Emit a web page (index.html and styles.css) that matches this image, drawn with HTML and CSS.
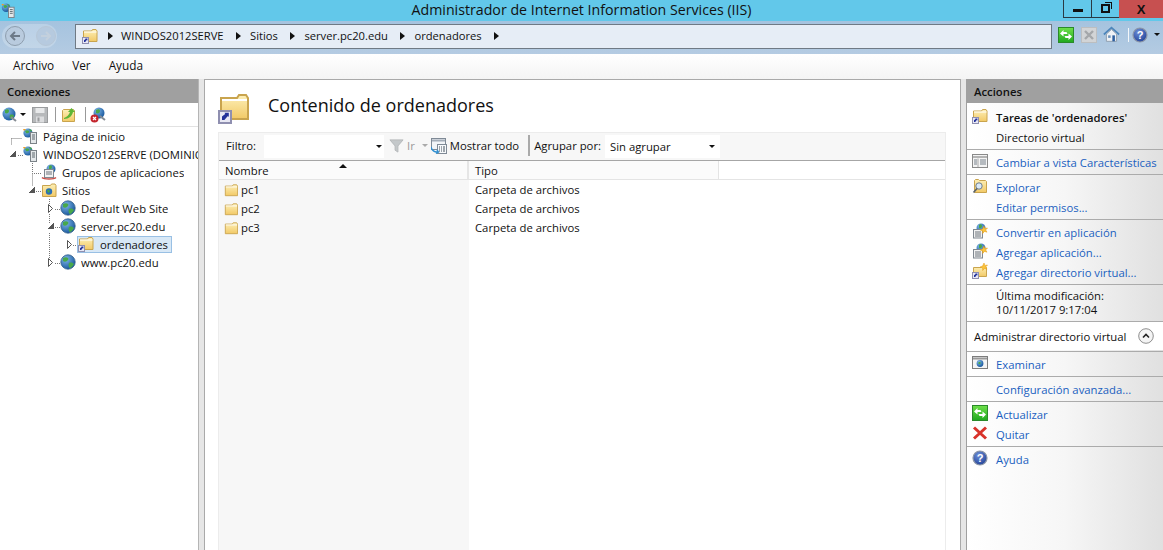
FILE: index.html
```html
<!DOCTYPE html>
<html lang="es">
  <head>
    <meta charset="UTF-8" />
    <title>Administrador de Internet Information Services (IIS)</title>
    <link rel="stylesheet" href="styles.css">
  </head>

  <body>
    <!-- shared icons -->
    <svg class="icon-defs" aria-hidden="true">
      <defs>
        <linearGradient id="gFolder" x1="0" y1="0" x2="0" y2="1">
          <stop offset="0" stop-color="#fdf0b8" />
          <stop offset="1" stop-color="#f2c966" />
        </linearGradient>
        <radialGradient id="gGlobe" cx="0.35" cy="0.3" r="0.8">
          <stop offset="0" stop-color="#7fb6e8" />
          <stop offset="1" stop-color="#0f4f96" />
        </radialGradient>
        <linearGradient id="gGreen" x1="0" y1="0" x2="0" y2="1">
          <stop offset="0" stop-color="#6fe04a" />
          <stop offset="1" stop-color="#1fa81f" />
        </linearGradient>
        <radialGradient id="gHelp" cx="0.4" cy="0.3" r="0.8">
          <stop offset="0" stop-color="#6d8fd8" />
          <stop offset="1" stop-color="#1c3c92" />
        </radialGradient>

        <symbol id="i-folder" viewBox="0 0 16 16">
          <path d="M1.500 14.500V3.500h8l1-1.500h4l1 1.500v11z" fill="url(#gFolder)" stroke="#c9a44e" />
          <path d="M2 4.500h13" stroke="#fff" />
        </symbol>
        <symbol id="i-folder-link" viewBox="0 0 16 16">
          <path d="M1.500 13.500V3h8l1-1.500h3.500l1 1.500v10.500z" fill="url(#gFolder)" stroke="#c9a44e" />
          <path d="M2 4h12.500" stroke="#fff" />
          <use href="#i-arrow" />
        </symbol>
        <symbol id="i-arrow" viewBox="0 0 16 16">
          <rect x="0.500" y="9.500" width="6" height="6" fill="#e8e8f4" stroke="#8f8fb0" />
          <path d="M2 14V12.200L3.600 11l-.3-.6H5.400v2l-.6-.3L3.200 14z" fill="#22319a" />
        </symbol>
        <symbol id="i-globe" viewBox="0 0 16 16">
          <circle cx="8" cy="8" r="7.200" fill="url(#gGlobe)" stroke="#345f8c" stroke-width="0.800" />
          <path d="M3 4c2-1 4-1 5 0s0 2-1 3-3 1-4 0zM9 9c2-1 4 0 5 1-1 2-3 4-4 4s-2-3-1-5z" fill="#48a84a" />
        </symbol>
        <symbol id="i-server" viewBox="0 0 16 16">
          <circle cx="6" cy="5" r="4.600" fill="url(#gGlobe)" />
          <path d="M3 3c1-1 3-1 4 0s-1 3-3 2zM7 1l3 1-1 2z" fill="#48a84a" />
          <path d="M1 1h3L2 3z" fill="#f2a023" />
          <rect x="8.500" y="4.500" width="6" height="11" fill="#e4e8ea" stroke="#7b8288" />
          <path d="M10 7h3M10 9h3M10 11h3" stroke="#5d666d" />
        </symbol>
        <symbol id="i-pool" viewBox="0 0 16 16">
          <circle cx="10" cy="5" r="4.500" fill="url(#gGlobe)" />
          <path d="M8 2c1-1 3-1 3 1s-2 3-3 2z" fill="#48a84a" />
          <rect x="3.500" y="5.500" width="9" height="8" fill="#f2f2f2" stroke="#808890" />
          <path d="M5 8h6M5 10h6" stroke="#6c747c" />
          <path d="M1 13.500c2 2 12 2 14 0" fill="none" stroke="#c8504a" stroke-width="1.400" />
        </symbol>
        <symbol id="i-sites" viewBox="0 0 16 16">
          <path d="M1.500 14.500V3.500h8l1-1.500h3.500l1 1.500v11z" fill="url(#gFolder)" stroke="#c9a44e" />
          <circle cx="8" cy="9.500" r="3.200" fill="#2a6fb5" />
          <path d="M6 8.500l2-1 1 2-2 1.500z" fill="#48a84a" />
        </symbol>
        <symbol id="i-views" viewBox="0 0 16 16">
          <rect x="0.500" y="1.500" width="15" height="13" fill="#f4f4f4" stroke="#8a8a8a" />
          <path d="M1 4h14" stroke="#b4b4b4" stroke-width="2" />
          <path d="M6 5.500v8.500" stroke="#a8a8a8" />
          <path d="M2 7h3M2 9h3M2 11h3M8 7h6M8 9h6M8 11h6" stroke="#77808a" />
        </symbol>
        <symbol id="i-explore" viewBox="0 0 16 16">
          <path d="M2.500 14.500V2.500l1-1h3l1 1h6l1 1v11z" fill="url(#gFolder)" stroke="#c9a44e" />
          <circle cx="7" cy="8" r="3.200" fill="#dbeaf6" stroke="#6d7d8c" />
          <path d="M5 10.500L1.500 14.500" stroke="#59626b" stroke-width="1.600" />
        </symbol>
        <symbol id="i-app" viewBox="0 0 16 16">
          <circle cx="9" cy="5" r="4.500" fill="url(#gGlobe)" />
          <path d="M7 2c1-1 3-1 3 1s-2 3-3 2z" fill="#48a84a" />
          <rect x="1.500" y="6.500" width="9" height="8.500" fill="#f2f2f2" stroke="#808890" />
          <path d="M3 9h6M3 11h6M3 13h6" stroke="#6c747c" />
          <use href="#i-star" />
        </symbol>
        <symbol id="i-star" viewBox="0 0 16 16">
          <path d="M12 3l.9 2.400 2.600-.4-1.800 1.900 1.300 2.300-2.500-.8L10.700 10.500l-.1-2.600-2.400-1 2.400-.9z" fill="#f9c23c" stroke="#e69a12" stroke-width="0.500" />
        </symbol>
        <symbol id="i-vdir" viewBox="0 0 16 16">
          <path d="M1.500 13.500V4.500h8l1-1h3l1 1v9z" fill="url(#gFolder)" stroke="#c9a44e" />
          <use href="#i-arrow" />
          <path d="M12 0l.9 2.400 2.600-.4-1.800 1.900 1.300 2.300-2.500-.8-1.800 2.100-.1-2.600-2.400-1 2.400-.9z" fill="#f9c23c" stroke="#e69a12" stroke-width="0.500" />
        </symbol>
        <symbol id="i-browse" viewBox="0 0 16 16">
          <rect x="0.500" y="1.500" width="15" height="12" fill="#f4f4f4" stroke="#7d7d7d" />
          <path d="M1 3.500h14" stroke="#9a9a9a" stroke-width="2" />
          <circle cx="8" cy="8.500" r="3.400" fill="url(#gGlobe)" />
          <path d="M6.500 7l2 0 0 2-2 0z" fill="#48a84a" />
        </symbol>
        <symbol id="i-refresh" viewBox="0 0 16 16">
          <rect x="0.500" y="0.500" width="15" height="15" fill="url(#gGreen)" stroke="#2a8a2a" />
          <path d="M2 6.500L5.500 3v2h3l1 2h-4v2.500zM14 9.500L10.500 13v-2h-3l-1-2h4V6.500z" fill="#fff" />
        </symbol>
        <symbol id="i-stop" viewBox="0 0 16 16">
          <rect x="0.500" y="0.500" width="15" height="15" fill="#d2d4d6" stroke="#bcbec0" />
          <path d="M4 4l8 8M12 4l-8 8" stroke="#a4a7aa" stroke-width="2.400" />
        </symbol>
        <symbol id="i-remove" viewBox="0 0 16 16">
          <path d="M2 2.500l12 11M14 2.500l-12 11" stroke="#d8322a" stroke-width="3" />
        </symbol>
        <symbol id="i-help" viewBox="0 0 16 16">
          <circle cx="8" cy="8" r="7" fill="url(#gHelp)" stroke="#8d97a8" stroke-width="1.200" />
          <text x="8" y="12" text-anchor="middle" class="help-mark">?</text>
        </symbol>
        <symbol id="i-home" viewBox="0 0 20 20">
          <path d="M1 10L10 2l9 8" fill="none" stroke="#4d86bb" stroke-width="2" />
          <path d="M4 9.500L10 4l6 5.500V18H4z" fill="#eef2f6" stroke="#8796a6" />
          <rect x="11" y="11" width="3" height="7" fill="#2d5f9f" />
          <rect x="6" y="11" width="3" height="3" fill="#6d93bb" />
        </symbol>
        <symbol id="i-connect" viewBox="0 0 16 16">
          <circle cx="7" cy="7" r="6.500" fill="url(#gGlobe)" />
          <path d="M3 3c2-1 4-1 4 1s-2 3-4 2zM8 8c2-1 4 0 4 1s-2 3-3 3-2-2-1-4z" fill="#48a84a" />
          <path d="M9 10l5 4" stroke="#868d94" stroke-width="2" />
        </symbol>
        <symbol id="i-save" viewBox="0 0 16 16">
          <rect x="0.500" y="0.500" width="15" height="15" fill="#b7b9bb" stroke="#9a9c9e" />
          <rect x="3.500" y="1" width="9" height="5" fill="#e8e9ea" />
          <rect x="4" y="9.500" width="8" height="6" fill="#dcdddf" />
          <rect x="5.500" y="10.500" width="2" height="4" fill="#9a9c9e" />
        </symbol>
        <symbol id="i-up" viewBox="0 0 16 16">
          <path d="M1.500 14.500V3.500l1-1h10l1 1v11z" fill="url(#gFolder)" stroke="#c9a44e" />
          <path d="M3 11c3-1 5-3 6-6H7l3.500-4L14 5h-2c-1 4-4 7-9 7z" fill="#5eb636" />
        </symbol>
        <symbol id="i-disconnect" viewBox="0 0 16 16">
          <circle cx="9" cy="6" r="5.500" fill="url(#gGlobe)" />
          <path d="M6 3c2-1 4-1 4 1s-2 3-4 2z" fill="#48a84a" />
          <path d="M10 9l5 4" stroke="#868d94" stroke-width="2" />
          <circle cx="4.500" cy="11.500" r="4" fill="#c4262e" />
          <path d="M3 10l3 3M6 10l-3 3" stroke="#fff" stroke-width="1.200" />
        </symbol>
        <symbol id="i-filter" viewBox="0 0 16 16">
          <path d="M1 2h14L9.500 8.500V15l-3-2V8.500z" fill="#c4c8ca" stroke="#b4b8ba" />
        </symbol>
        <symbol id="i-showall" viewBox="0 0 16 16">
          <rect x="0.500" y="0.500" width="14" height="11" fill="#f1f4f7" stroke="#7f8a96" />
          <path d="M1 2.500h13" stroke="#a3adb8" stroke-width="2" />
          <rect x="6.500" y="6.500" width="9" height="9" fill="#f7f9fb" stroke="#7f8a96" />
          <path d="M8 9h1M10 9h1M12 9h2M8 11h1M10 11h1M12 11h2M8 13h1M10 13h1M12 13h2" stroke="#43505c" />
          <path d="M0 9c1 4 3 5 6 5M6 12l1.500 2L5 15.500" fill="none" stroke="#2f8fd1" stroke-width="1.400" />
        </symbol>
        <symbol id="i-closed" viewBox="0 0 13 9">
          <path d="M1.500 0.500v8l4-4z" fill="#fff" stroke="#555" />
        </symbol>
      </defs>
    </svg>

    <header class="titlebar">
      <svg class="app-icon"><use href="#i-server" /></svg>
      <span class="titlebar-text">Administrador de Internet Information Services (IIS)</span>
      <div class="winbtns">
        <div class="winbtn"><span class="glyph-min"></span></div>
        <div class="winbtn"><span class="glyph-max"></span></div>
        <div class="winbtn winbtn-close">X</div>
      </div>
    </header>

    <nav class="navbar">
      <div class="nav-orb">
        <span class="nav-btn"><svg viewBox="0 0 14 14"><path d="M12 7H3M7 3L3 7l4 4" fill="none" stroke="#6d7a88" stroke-width="2" /></svg></span>
        <span class="nav-btn nav-btn-off"><svg viewBox="0 0 14 14"><path d="M2 7h9M7 3l4 4-4 4" fill="none" stroke="#c3d0dd" stroke-width="2" /></svg></span>
      </div>
      <div class="address">
        <svg class="ic16"><use href="#i-folder-link" /></svg>
        <span class="crumb-sep first"></span><span>WINDOS2012SERVE</span>
        <span class="crumb-sep"></span><span>Sitios</span>
        <span class="crumb-sep"></span><span>server.pc20.edu</span>
        <span class="crumb-sep"></span><span>ordenadores</span>
        <span class="crumb-sep"></span>
      </div>
      <div class="nav-tools">
        <svg class="ic16"><use href="#i-refresh" /></svg>
        <svg class="ic16"><use href="#i-stop" /></svg>
        <svg class="ic-home"><use href="#i-home" /></svg>
        <span class="nav-tools-sep"></span>
        <svg class="ic16"><use href="#i-help" /></svg>
        <span class="drop-arrow"></span>
      </div>
    </nav>

    <div class="menubar">
      <span>Archivo</span>
      <span>Ver</span>
      <span>Ayuda</span>
    </div>

    <main class="workspace">
      <section class="pane-left">
        <h2 class="pane-head">Conexiones</h2>
        <div class="conn-tools">
          <svg class="ic16"><use href="#i-connect" /></svg>
          <span class="drop-arrow small"></span>
          <svg class="ic16 tool-save"><use href="#i-save" /></svg>
          <span class="tool-sep"></span>
          <svg class="ic16"><use href="#i-up" /></svg>
          <span class="tool-sep"></span>
          <svg class="ic16"><use href="#i-disconnect" /></svg>
        </div>
        <div class="tree">
          <svg class="tree-lines" width="100" height="150">
            <path d="M11.500 11.500H22M11.500 11.500V18M18 28.500H23M32.500 36V46.500H41M32.500 46.500V59M36 64.500H41M49.500 72V78M55 82.500H60M49.500 87V96M55 100.500H60M49.500 106V131M55 136.500H60M73 118.500H77" fill="none" stroke="#777" stroke-dasharray="1 1" />
          </svg>
          <div class="tree-row lvl0"><span class="twist"></span><svg class="ic16"><use href="#i-server" /></svg><span class="tree-label">Página de inicio</span></div>
          <div class="tree-row lvl0"><span class="twist open"></span><svg class="ic16"><use href="#i-server" /></svg><span class="tree-label">WINDOS2012SERVE (DOMINIO</span></div>
          <div class="tree-row lvl1"><span class="twist"></span><svg class="ic16"><use href="#i-pool" /></svg><span class="tree-label">Grupos de aplicaciones</span></div>
          <div class="tree-row lvl1"><span class="twist open"></span><svg class="ic16"><use href="#i-sites" /></svg><span class="tree-label">Sitios</span></div>
          <div class="tree-row lvl2"><svg class="twist"><use href="#i-closed" /></svg><svg class="ic16"><use href="#i-globe" /></svg><span class="tree-label">Default Web Site</span></div>
          <div class="tree-row lvl2"><span class="twist open"></span><svg class="ic16"><use href="#i-globe" /></svg><span class="tree-label">server.pc20.edu</span></div>
          <div class="tree-row lvl3"><svg class="twist"><use href="#i-closed" /></svg><div class="tree-sel"><svg class="ic16"><use href="#i-folder-link" /></svg><span class="tree-label">ordenadores</span></div></div>
          <div class="tree-row lvl2"><svg class="twist"><use href="#i-closed" /></svg><svg class="ic16"><use href="#i-globe" /></svg><span class="tree-label">www.pc20.edu</span></div>
        </div>
      </section>

      <section class="pane-center">
        <div class="page-head">
          <svg class="ic-page"><use href="#i-folder-link" /></svg>
          <h1>Contenido de ordenadores</h1>
        </div>
        <div class="content-box">
          <div class="filter-bar">
            <span class="filter-label">Filtro:</span>
            <div class="combo combo-filter"><span class="drop-arrow small"></span></div>
            <svg class="ic-filter"><use href="#i-filter" /></svg>
            <span class="filter-go">Ir</span>
            <span class="drop-arrow small light"></span>
            <svg class="ic16"><use href="#i-showall" /></svg>
            <span class="filter-all">Mostrar todo</span>
            <span class="filter-sep"></span>
            <span class="filter-group">Agrupar por:</span>
            <div class="combo combo-group"><span>Sin agrupar</span><span class="drop-arrow small"></span></div>
          </div>
          <div class="list-head">
            <div class="col-name">Nombre<span class="sort-arrow"></span></div>
            <div class="col-type">Tipo</div>
          </div>
          <div class="list-body">
            <div class="list-row"><div class="col-name"><svg class="ic-row"><use href="#i-folder" /></svg>pc1</div><div class="col-type">Carpeta de archivos</div></div>
            <div class="list-row"><div class="col-name"><svg class="ic-row"><use href="#i-folder" /></svg>pc2</div><div class="col-type">Carpeta de archivos</div></div>
            <div class="list-row"><div class="col-name"><svg class="ic-row"><use href="#i-folder" /></svg>pc3</div><div class="col-type">Carpeta de archivos</div></div>
          </div>
        </div>
      </section>

      <aside class="pane-right">
        <h2 class="pane-head">Acciones</h2>
        <div class="act-group first">
          <div class="act-row act-title"><svg class="ic16"><use href="#i-folder-link" /></svg>Tareas de 'ordenadores'</div>
          <div class="act-row act-plain">Directorio virtual</div>
        </div>
        <div class="act-group">
          <div class="act-row"><svg class="ic16"><use href="#i-views" /></svg><a>Cambiar a vista Características</a></div>
        </div>
        <div class="act-group">
          <div class="act-row"><svg class="ic16"><use href="#i-explore" /></svg><a>Explorar</a></div>
          <div class="act-row"><a>Editar permisos...</a></div>
        </div>
        <div class="act-group">
          <div class="act-row"><svg class="ic16"><use href="#i-app" /></svg><a>Convertir en aplicación</a></div>
          <div class="act-row"><svg class="ic16"><use href="#i-app" /></svg><a>Agregar aplicación...</a></div>
          <div class="act-row"><svg class="ic16"><use href="#i-vdir" /></svg><a>Agregar directorio virtual...</a></div>
        </div>
        <div class="act-group act-info">
          <div>Última modificación:</div>
          <div>10/11/2017 9:17:04</div>
        </div>
        <div class="act-band">
          <span>Administrar directorio virtual</span>
          <span class="collapse-btn"><svg viewBox="0 0 16 16"><circle cx="8" cy="8" r="7.300" fill="#f4f4f4" stroke="#8e8e8e" /><path d="M5 9.500L8 6.500l3 3" fill="none" stroke="#222" stroke-width="1.600" /></svg></span>
        </div>
        <div class="act-group">
          <div class="act-row"><svg class="ic16"><use href="#i-browse" /></svg><a>Examinar</a></div>
        </div>
        <div class="act-group">
          <div class="act-row"><a>Configuración avanzada...</a></div>
        </div>
        <div class="act-group">
          <div class="act-row"><svg class="ic16"><use href="#i-refresh" /></svg><a>Actualizar</a></div>
          <div class="act-row"><svg class="ic16"><use href="#i-remove" /></svg><a>Quitar</a></div>
        </div>
        <div class="act-group last">
          <div class="act-row"><svg class="ic16"><use href="#i-help" /></svg><a>Ayuda</a></div>
        </div>
      </aside>
    </main>
  </body>
</html>
```

FILE: styles.css
```css
* {
  box-sizing: border-box;
}

html,
body {
  height: 100%;
}

body {
  margin: 0;
  width: 1163px;
  height: 550px;
  overflow: hidden;
  display: flex;
  flex-direction: column;
  background: #fff;
  color: #111;
  font-family: "Open Sans", "Noto Sans", sans-serif;
  font-size: 11.3px;
}

h1,
h2 {
  margin: 0;
  font-weight: normal;
}

svg {
  flex: none;
  display: block;
}

.icon-defs {
  position: absolute;
  width: 0;
  height: 0;
}

.help-mark {
  font-family: "Liberation Sans", sans-serif;
  font-size: 11px;
  font-weight: bold;
  fill: #fff;
}

.ic16 {
  width: 16px;
  height: 16px;
}

/* title bar */

.titlebar {
  flex: none;
  height: 21px;
  display: flex;
  align-items: flex-start;
  background: #62c8ea;
}

.app-icon {
  width: 16px;
  height: 15px;
  margin-top: 3px;
  flex: none;
}

.titlebar-text {
  flex: 1;
  margin-left: 64px;
  margin-right: -20px;
  text-align: center;
  font-size: 14.2px;
  line-height: 19px;
  color: #111;
}

.winbtns {
  display: flex;
  height: 18px;
}

.winbtn {
  width: 28px;
  height: 18px;
  display: flex;
  align-items: center;
  justify-content: center;
  border: 1px solid #2a3a44;
  border-top: 0;
  border-right: 0;
}

.winbtn-close {
  width: 44px;
  border: 0;
  background: #c75050;
  font-family: "Liberation Sans", sans-serif;
  font-size: 13px;
  font-weight: bold;
  color: #111;
}

.glyph-min {
  width: 10px;
  height: 3px;
  margin-top: 3px;
  background: #111;
}

.glyph-max {
  width: 9px;
  height: 9px;
  border: 2px solid #111;
  box-shadow: 2px -2px 0 -1px #62c8ea, 3px -3px 0 -1px #111;
}

/* address bar */

.navbar {
  flex: none;
  height: 33px;
  display: flex;
  align-items: flex-start;
  background: linear-gradient(#a5c3df, #b4cbe2);
}

.nav-orb {
  width: 55px;
  height: 24px;
  margin: 3px 0 0 2px;
  padding: 0 1px 0 3px;
  display: flex;
  align-items: center;
  justify-content: space-between;
  border-radius: 12px;
  background: rgba(255, 255, 255, 0.22);
}

.nav-btn {
  width: 20px;
  height: 20px;
  padding: 2px;
  border: 1px solid #8e9eae;
  border-radius: 50%;
  background: #b9cbde;
}

.nav-btn svg {
  width: 14px;
  height: 14px;
}

.nav-btn-off {
  border-color: #b7c7d7;
  background: #b6cadf;
}

.address {
  width: 977px;
  height: 25px;
  margin: 3px 0 0 18px;
  padding: 0 0 2px 6px;
  display: flex;
  align-items: center;
  border: 1px solid #6f7a85;
  background: #e6edf6;
  font-size: 11.2px;
}

.crumb-sep {
  width: 0;
  height: 0;
  margin: 0 9.5px 0 12px;
  border-left: 5px solid #111;
  border-top: 4px solid transparent;
  border-bottom: 4px solid transparent;
}

.crumb-sep.first {
  margin-left: 10px;
  margin-right: 8px;
}

.nav-tools {
  flex: 1;
  height: 21px;
  margin-top: 3px;
  padding-left: 6px;
  display: flex;
  align-items: center;
  gap: 7px;
}

.ic-home {
  width: 17px;
  height: 17px;
  margin-left: -1px;
}

.nav-tools-sep {
  width: 1px;
  height: 14px;
  margin: 0 -4px 0 1px;
  background: #f4f7fa;
}

.drop-arrow {
  width: 0;
  height: 0;
  flex: none;
  border-top: 3px solid #111;
  border-left: 3px solid transparent;
  border-right: 3px solid transparent;
}

.nav-tools .drop-arrow {
  margin-left: -1px;
}

.drop-arrow.small {
  margin-left: 2px;
}

.drop-arrow.light {
  border-top-color: #aaa;
}

/* menu */

.menubar {
  flex: none;
  height: 25px;
  padding: 0 0 3px 13px;
  display: flex;
  align-items: center;
  gap: 18px;
  background: linear-gradient(#fff, #f4f4f4);
  font-size: 11.8px;
}

/* panes */

.workspace {
  flex: 1;
  min-height: 0;
  display: grid;
  grid-template-columns: 199px 762px 197px;
  background: #e6e6e6;
}

.pane-left {
  border-right: 1px solid #b5b5b5;
  background: #fff;
  min-width: 0;
}

.pane-head {
  height: 24px;
  padding-left: 7px;
  background: #a0a0a0;
  font-size: 11.3px;
  font-weight: 600;
  line-height: 25px;
  color: #111;
}

.conn-tools {
  height: 24px;
  padding-left: 2px;
  display: flex;
  align-items: center;
  border-bottom: 1px solid #e2e2e2;
}

.tool-save {
  margin-left: 6px;
}

.tool-sep {
  width: 1px;
  height: 15px;
  margin: 0 5px 0 7px;
  background: #999;
}

.conn-tools .tool-sep:last-of-type {
  margin: 0 4px 0 8px;
}

.tree {
  position: relative;
  overflow: hidden;
}

.tree-lines {
  position: absolute;
  left: 0;
  top: 0;
}

.tree-row {
  position: relative;
  height: 18px;
  display: flex;
  align-items: center;
  white-space: nowrap;
}

.lvl0 {
  padding-left: 9px;
}

.lvl1 {
  padding-left: 28px;
}

.lvl2 {
  padding-left: 47px;
}

.lvl3 {
  padding-left: 66px;
}

.twist {
  width: 13px;
  height: 9px;
  flex: none;
}

.twist.open {
  background: linear-gradient(135deg, transparent 50%, #555 50%) no-repeat 1px 1px / 6px 6px;
}

.tree-label {
  min-width: 0;
  margin-left: 5px;
  overflow: hidden;
}

.tree-sel {
  height: 17px;
  margin-left: -2px;
  padding-right: 3px;
  display: flex;
  align-items: center;
  border: 1px solid #99c0e4;
  background: #d8e8f6;
}

.tree-sel .tree-label {
  margin-left: 6px;
}

/* center */

.pane-center {
  width: 757px;
  margin-left: 5px;
  padding: 0 14px;
  display: flex;
  flex-direction: column;
  border: 1px solid #a9a9a9;
  border-bottom: 0;
  background: #fff;
}

.page-head {
  height: 52px;
  display: flex;
  align-items: center;
  flex: none;
}

.ic-page {
  width: 32px;
  height: 32px;
  margin: 3px 0 0 -1px;
}

.page-head h1 {
  margin-left: 18px;
  margin-top: -3px;
  font-size: 18px;
}

.content-box {
  flex: 1;
  width: 728px;
  margin-left: -1px;
  display: flex;
  flex-direction: column;
  border: 1px solid #ececec;
  border-bottom: 0;
}

.filter-bar {
  flex: none;
  height: 28px;
  padding: 0 0 2px 7px;
  display: flex;
  align-items: center;
  background: #f7f7f7;
  border-bottom: 1px solid #a6a6a6;
}

.filter-label {
  width: 38px;
}

.combo {
  height: 23px;
  margin-top: 2px;
  display: flex;
  align-items: center;
  justify-content: space-between;
  background: #fff;
}

.combo-filter {
  width: 120px;
  justify-content: flex-end;
  padding-right: 2px;
}

.ic-filter {
  width: 15px;
  height: 15px;
  margin-left: 5px;
}

.filter-go {
  margin-left: 3px;
  color: #9a9a9a;
}

.filter-bar .drop-arrow.light {
  margin: 0 3px 0 7px;
}

.filter-all {
  margin-left: 3px;
}

.filter-sep {
  width: 2px;
  height: 21px;
  margin: 0 4px 0 9px;
  background: #aaa;
}

.combo-group {
  width: 115px;
  margin-left: 4px;
  padding: 0 5px 1px 5px;
}

.list-head,
.list-row {
  display: flex;
}

.list-head {
  flex: none;
  height: 19px;
  border-bottom: 1px solid #e4e4e4;
  background: #fff;
}

.list-head .col-name {
  position: relative;
  border-right: 2px solid #e6e6e6;
  background: #fbfbfb;
}

.list-head .col-type {
  border-right: 1px solid #e4e4e4;
  background: #fbfbfb;
}

.col-name,
.col-type {
  width: 250px;
  padding-left: 6px;
  display: flex;
  align-items: center;
}

.sort-arrow {
  position: absolute;
  left: 120px;
  top: 3px;
  width: 0;
  height: 0;
  border-bottom: 4px solid #111;
  border-left: 4px solid transparent;
  border-right: 4px solid transparent;
}

.list-body {
  flex: 1;
  background: linear-gradient(90deg, #f7f7f7 250px, #fff 250px);
}

.list-row {
  height: 19px;
}

.ic-row {
  width: 14px;
  height: 14px;
  margin: 0 3px 0 -1px;
}

/* actions */

.pane-right {
  width: 197px;
  margin-left: 5px;
  grid-column: 3;
  min-width: 0;
  border-left: 1px solid #a0a0a0;
  background: linear-gradient(90deg, #fff 0, #f6f6f6 50%, #e0e0e0 100%);
}

.pane-right .pane-head {
  margin-left: -1px;
  padding-left: 8px;
}

.act-group {
  padding: 2px 0;
  border-bottom: 1px solid #ababab;
}

.act-group.first {
  padding-top: 4px;
}

.act-group.last {
  border-bottom: 0;
}

.act-row {
  position: relative;
  height: 20px;
  padding-left: 29px;
  display: flex;
  align-items: center;
}

.act-row .ic16 {
  position: absolute;
  left: 5px;
  top: 1px;
}

.act-row a {
  color: #1a5fc0;
}

.act-title {
  font-weight: 600;
}

.act-info {
  padding: 4px 0 4px 29px;
  line-height: 14px;
}

.act-band {
  height: 28px;
  margin-bottom: 1px;
  padding: 0 9px 0 7px;
  display: flex;
  align-items: center;
  justify-content: space-between;
  background: #fff;
}

.act-band + .act-group {
  border-top: 1px solid #ababab;
  margin-top: 1px;
}

.collapse-btn,
.collapse-btn svg {
  width: 16px;
  height: 16px;
}
```
